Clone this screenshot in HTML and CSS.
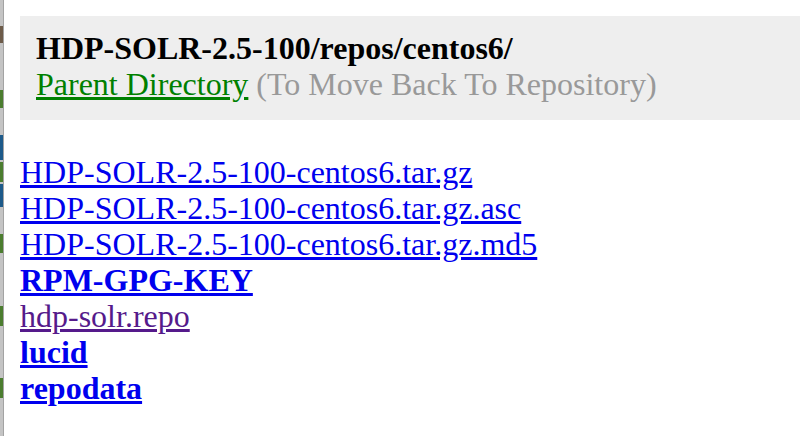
FILE: index.html
```html
<!DOCTYPE html>
<html lang="en">

<head>
    <meta charset="UTF-8" />
    <title>HDP-SOLR-2.5-100/repos/centos6/</title>
    <link rel="stylesheet" href="styles.css">
</head>

<body>
    <div class="edge"></div>

    <main>
        <header class="crumbs">
            <div class="path">HDP-SOLR-2.5-100/repos/centos6/</div>
            <a class="parent" href="#">Parent Directory</a>
            <span class="hint">(To Move Back To Repository)</span>
        </header>

        <ul class="listing">
            <li><a href="#">HDP-SOLR-2.5-100-centos6.tar.gz</a></li>
            <li><a href="#">HDP-SOLR-2.5-100-centos6.tar.gz.asc</a></li>
            <li><a href="#">HDP-SOLR-2.5-100-centos6.tar.gz.md5</a></li>
            <li><a class="dir" href="#">RPM-GPG-KEY</a></li>
            <li><a class="visited" href="#">hdp-solr.repo</a></li>
            <li><a class="dir" href="#">lucid</a></li>
            <li><a class="dir" href="#">repodata</a></li>
        </ul>
    </main>
</body>

</html>
```

FILE: styles.css
```css
:root {
    --panel: #eeeeee;
    --link: #0000ee;
    --visited: #551a8b;
    --parent: #008000;
    --muted: #999999;
    --edge: #c4c4c4;
    --edge-line: #a3a3a3;
    --green: #4b7d2f;
    --blue: #1d5a8a;
    --brown: #6d5b49;
}

html, body {
    height: 100%;
}

body {
    margin: 0;
    display: flex;
    background: #ffffff;
    font-family: "Liberation Serif", "Times New Roman", serif;
    font-size: 32px;
    line-height: 36px;
    color: black;
    overflow: hidden;
}

/* sliver of the window behind */
.edge {
    flex: 0 0 3px;
    border-right: 1px solid var(--edge-line);
    background:
        linear-gradient(to bottom,
            var(--edge) 0 26px, var(--brown) 26px 43px, var(--edge) 43px 90px,
            var(--green) 90px 108px, var(--edge) 108px 135px,
            var(--blue) 135px 160px, var(--edge) 160px 162px,
            var(--green) 162px 182px, var(--edge) 182px 184px,
            var(--blue) 184px 207px, var(--edge) 207px 234px,
            var(--green) 234px 253px, var(--edge) 253px 306px,
            var(--green) 306px 326px, var(--edge) 326px 378px,
            var(--green) 378px 398px, var(--edge) 398px 100%);
}

main {
    flex: 1;
    padding: 16px 0 0 16px;
}

.crumbs {
    background: var(--panel);
    padding: 14px 16px 18px;
}

.crumbs .path {
    font-weight: bold;
}

.crumbs .parent {
    color: var(--parent);
}

.crumbs .hint {
    color: var(--muted);
}

.listing {
    list-style: none;
    margin: 34px 0 0;
    padding: 0;
}

.listing a {
    color: var(--link);
}

.listing a.dir {
    font-weight: bold;
}

.listing a.visited {
    color: var(--visited);
}
```
